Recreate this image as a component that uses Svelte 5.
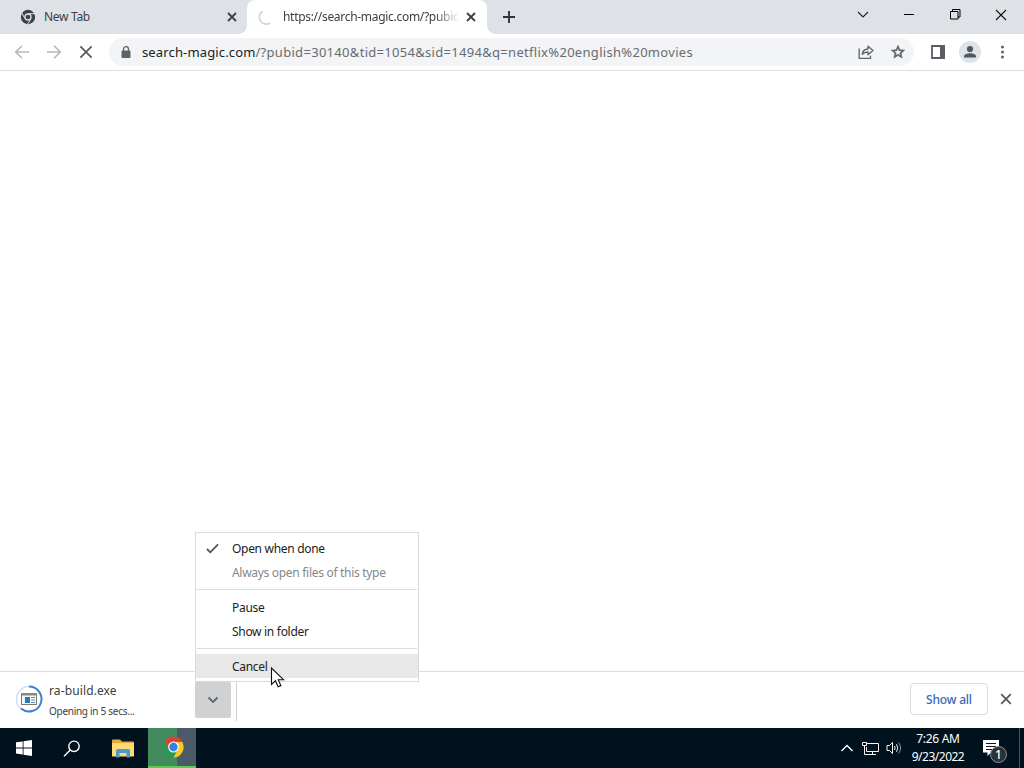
<script lang="ts">
  interface MenuItem {
    label: string;
    checked?: boolean;
    disabled?: boolean;
    hovered?: boolean;
  }

  const menuGroups: MenuItem[][] = [
    [
      { label: 'Open when done', checked: true },
      { label: 'Always open files of this type', disabled: true },
    ],
    [{ label: 'Pause' }, { label: 'Show in folder' }],
    [{ label: 'Cancel', hovered: true }],
  ];

  const host = 'search-magic.com';
  const path = '/?pubid=30140&tid=1054&sid=1494&q=netflix%20english%20movies';

  let menuOpen = $state(true);
</script>

{#snippet cross(size: number, stroke: number)}
  <svg width={size} height={size} viewBox="0 0 10 10" fill="none" stroke="currentColor" stroke-width={stroke}>
    <path d="M1 1l8 8M9 1l-8 8" />
  </svg>
{/snippet}

<div class="desktop">
  <div class="tabstrip">
    <div class="tab">
      <svg class="favicon" width="16" height="16" viewBox="0 0 16 16">
        <circle cx="8" cy="8" r="7.2" fill="#3c4248" />
        <circle cx="8" cy="8" r="3" fill="#3c4248" stroke="#dee1e6" stroke-width="1.3" />
        <path d="M8 4.7h7M5.1 9.7L1.7 3.9M10.9 9.7l-3.4 5.7" stroke="#dee1e6" stroke-width="1" />
      </svg>
      <span class="tab-title first-title">New Tab</span>
      <button class="tab-close" aria-label="Close tab">{@render cross(10, 1.8)}</button>
    </div>
    <div class="tab active">
      <svg class="favicon" width="16" height="16" viewBox="0 0 16 16" fill="none" stroke="#d3d6da" stroke-width="1.8">
        <path d="M4.6 2.2A7 7 0 0 0 12.2 14" />
      </svg>
      <span class="tab-title url-title">https://search-magic.com/?pubid</span>
      <button class="tab-close" aria-label="Close tab">{@render cross(10, 1.8)}</button>
    </div>
    <button class="new-tab" aria-label="New tab">
      <svg width="12" height="12" viewBox="0 0 12 12" stroke="#30343a" stroke-width="1.9"><path d="M6 0v12M0 6h12" /></svg>
    </button>
    <div class="window-controls">
      <button aria-label="Search tabs">
        <svg width="12" height="12" viewBox="0 0 12 12" fill="none" stroke="#222" stroke-width="1.1"><path d="M1 3l5 5 5-5" /></svg>
      </button>
      <button aria-label="Minimize">
        <svg width="10" height="10" viewBox="0 0 10 10"><path d="M0 4h10v1H0z" fill="#000" /></svg>
      </button>
      <button aria-label="Restore">
        <svg width="11" height="11" viewBox="0 0 11 11" fill="none" stroke="#000"><path d="M.5 2.5h7.500v7.500h-7.500zM2.500 2.500v-2h7.500v7.500h-2" /></svg>
      </button>
      <button aria-label="Close">
        <svg width="12" height="12" viewBox="0 0 12 12" stroke="#111" stroke-width="1.1"><path d="M1 1l10 10M11 1L1 11" /></svg>
      </button>
    </div>
  </div>

  <div class="toolbar">
    <button class="tool" aria-label="Back">
      <svg width="16" height="16" viewBox="0 0 16 16" fill="none" stroke="#b5b7ba" stroke-width="1.6"><path d="M15 8H2M8 1.700L1.700 8 8 14.300" /></svg>
    </button>
    <button class="tool" aria-label="Forward">
      <svg width="16" height="16" viewBox="0 0 16 16" fill="none" stroke="#b5b7ba" stroke-width="1.6"><path d="M1 8h13M8 1.700L14.300 8 8 14.300" /></svg>
    </button>
    <button class="tool stop" aria-label="Stop">{@render cross(14, 1.25)}</button>
    <div class="omnibox">
      <svg class="lock" width="10" height="13" viewBox="0 0 10 13">
        <rect x="0.500" y="4.500" width="9" height="7.500" rx="1" fill="#5f6368" />
        <path d="M2.500 5V3a2.500 2.300 0 0 1 5 0v2" fill="none" stroke="#5f6368" stroke-width="1.300" />
      </svg>
      <span class="address"><span class="host">{host}</span>{path}</span>
      <button class="tool" aria-label="Share">
        <svg width="18" height="16" viewBox="0 0 18 16" fill="none" stroke="#5f6368" stroke-width="1.300">
          <path d="M2.200 4.500v9.800H13.500v-2.500" />
          <path d="M5.200 10.300C5.700 6.800 8 5.100 11 5V2.200l5 4.300-5 4.300V8c-2.600 0-4.400.700-5.800 2.300z" stroke-linejoin="round" />
        </svg>
      </button>
      <button class="tool" aria-label="Bookmark">
        <svg width="16" height="16" viewBox="0 0 24 24" fill="#5f6368">
          <path d="M22 9.240l-7.190-.620L12 2 9.190 8.630 2 9.240l5.460 4.730L5.820 21 12 17.270 18.180 21l-1.630-7.030L22 9.240zM12 15.400l-3.760 2.270 1-4.280-3.320-2.880 4.380-.380L12 6.100l1.710 4.040 4.380.380-3.320 2.880 1 4.280L12 15.400z" stroke="#5f6368" stroke-width="1" />
        </svg>
      </button>
    </div>
    <button class="tool side-panel" aria-label="Side panel">
      <svg width="14" height="14" viewBox="0 0 14 14"><path d="M1 1h12v12H1z" fill="#fff" stroke="#5a5e63" stroke-width="1.800" /><path d="M9 0h5v14H9z" fill="#5a5e63" /></svg>
    </button>
    <button class="tool" aria-label="Profile">
      <svg width="22" height="22" viewBox="0 0 22 22">
        <circle cx="11" cy="11" r="11" fill="#dfe3e8" />
        <g fill="#4e5963"><circle cx="11" cy="8" r="3.100" /><path d="M5 16.500v-1.200c0-2.100 3.300-3.100 6-3.100s6 1 6 3.100v1.200z" /></g>
      </svg>
    </button>
    <button class="tool" aria-label="Menu">
      <svg width="4" height="16" viewBox="0 0 4 16" fill="#5f6368"><circle cx="2.500" cy="3" r="1.500" /><circle cx="2.500" cy="8" r="1.500" /><circle cx="2.500" cy="13" r="1.500" /></svg>
    </button>
  </div>

  <div class="page"></div>

  <div class="downloads">
    <svg class="progress" width="28" height="28" viewBox="0 0 28 28" fill="none">
      <circle cx="14" cy="14" r="12.500" stroke="#cfdff3" stroke-width="1.500" />
      <path d="M14 1.500A12.500 12.500 0 1 1 6 23.600" stroke="#3f7fd0" stroke-width="2" />
      <rect x="6.500" y="8.500" width="15" height="11" fill="#f3f5f5" stroke="#827a70" />
      <path d="M6 8h16v2.500H6z" fill="#8b8881" />
      <path d="M10 12h5v6h-5z" fill="#2877b8" />
      <path d="M16 12.500h4M16 15h4M16 17.500h4" stroke="#6b94b9" />
    </svg>
    <div class="file">
      <span class="file-name">ra-build.exe</span>
      <span class="file-status">Opening in 5 secs...</span>
    </div>
    <button class="dropdown" aria-label="Download options" onclick={() => (menuOpen = !menuOpen)}>
      <svg width="12" height="8" viewBox="0 0 12 8" fill="none" stroke="#5c666b" stroke-width="1.800"><path d="M1.500 1.500L6 6l4.500-4.500" /></svg>
    </button>
    <div class="separator"></div>
    <button class="show-all">Show all</button>
    <button class="close-shelf" aria-label="Close downloads">{@render cross(12, 1.5)}</button>
    {#if menuOpen}
      <div class="menu">
        {#each menuGroups as group}
          <div class="group">
            {#each group as item}
              <div class="item" class:disabled={item.disabled} class:hovered={item.hovered}>
                <span class="check">
                  {#if item.checked}
                    <svg width="13" height="11" viewBox="0 0 13 11" fill="none" stroke="#555" stroke-width="1.800"><path d="M1 6l3.300 3.300L12 1.300" /></svg>
                  {/if}
                </span>
                <span class="label">{item.label}</span>
              </div>
            {/each}
          </div>
        {/each}
      </div>
    {/if}
  </div>

  <div class="taskbar">
    <button class="task" aria-label="Start">
      <svg width="16" height="16" viewBox="0 0 16 16" fill="#fff"><path d="M0 2.300l6.700-.9v6.100H0zM7.500 1.300L16 0v7.500H7.500zM0 8.400h6.700v6.100L0 13.600zM7.500 8.400H16V16l-8.500-1.200z" /></svg>
    </button>
    <button class="task" aria-label="Search">
      <svg width="18" height="17" viewBox="0 0 18 17" fill="none" stroke="#fff" stroke-width="1.400"><circle cx="11" cy="6.300" r="5.200" /><path d="M7.300 10L1 16.300" /></svg>
    </button>
    <button class="task files" aria-label="File Explorer">
      <svg width="22" height="19" viewBox="0 0 22 19">
        <path d="M0 1.500Q0 .5 1 .5h7l2 2h11q1 0 1 1V17H0z" fill="#e3ac3a" />
        <path d="M0 4h22v13.500H0z" fill="#fcda74" />
        <path d="M4 18.500V12q0-2 2-2h10q2 0 2 2v6.500h-3.500v-4.500h-7v4.500z" fill="#4b9acb" />
      </svg>
    </button>
    <button class="task chrome" aria-label="Chrome">
      <svg width="21" height="22" viewBox="0 0 22 22" preserveAspectRatio="none">
        <circle cx="11" cy="11" r="10.500" fill="#259b54" />
        <path d="M11 21.500A10.500 10.500 0 0 0 20.100 5.700H11l4.500 7.900z" fill="#fbc925" />
        <path d="M1.900 5.700A10.500 10.500 0 0 1 20.100 5.700H11L6.500 13.600z" fill="#df3f34" />
        <circle cx="11" cy="11" r="5.600" fill="#fff" />
        <circle cx="11" cy="11" r="4.400" fill="#347fe4" />
      </svg>
    </button>
    <div class="tray">
      <svg class="tray-up" width="12" height="8" viewBox="0 0 12 8" fill="none" stroke="#fff" stroke-width="1.400"><path d="M.5 7L6 1.500 11.500 7" /></svg>
      <svg class="network" width="17" height="15" viewBox="0 0 17 15" fill="none" stroke="#f4f6f7">
        <path d="M5 2.500h11.500v8H4.500V6M10.500 10.500v3M7 13.500h7M.5 1.500h4v3h-4zM2.500 5v8.500H7" />
      </svg>
      <svg class="volume" width="16" height="14" viewBox="0 0 16 14" fill="none" stroke="#f4f6f7">
        <path d="M1 4.500h2.500l3-3v11l-3-3H1zM8.500 5q1.300 2 0 4M10.500 3.200q2.500 3.800 0 7.600" />
        <path d="M12.600 1.500q4 5.500 0 11" stroke="#8c949b" />
      </svg>
      <div class="clock"><span class="time">7:26 AM</span><span class="date">9/23/2022</span></div>
      <div class="notifications">
        <svg width="17" height="17" viewBox="0 0 17 17"><path d="M0 0h16v12.500H8L4.500 16v-3.500H0z" fill="#fff" /><path d="M3 3.500h10M3 6.500h10M3 9.500h7" stroke="#111820" /></svg>
        <span class="count">1</span>
      </div>
      <div class="peek"></div>
    </div>
  </div>

  <svg class="cursor" width="15" height="22" viewBox="0 0 15 22">
    <path d="M1.500 1v16.500l3.900-3.700 2.700 6 2.800-1.200-2.700-5.900h5.300z" fill="#fff" stroke="#111" stroke-width="1.100" />
  </svg>
</div>

<style>
  :global(body) {
    margin: 0;
    background: #fff;
    overflow: hidden;
  }
  .desktop {
    position: relative;
    display: flex;
    flex-direction: column;
    width: 1024px;
    height: 768px;
    font-family: "Noto Sans", "Open Sans", sans-serif;
    font-size: 12px;
    color: #3c4043;
  }
  .desktop * { box-sizing: border-box; }
  button {
    display: flex;
    align-items: center;
    justify-content: center;
    padding: 0;
    border: 0;
    background: none;
    font: inherit;
    color: inherit;
    flex-shrink: 0;
  }
  svg { display: block; flex-shrink: 0; }

  .tabstrip {
    display: flex;
    height: 34px;
    background: #dee1e6;
  }
  .tab {
    display: flex;
    align-items: center;
    width: 240px;
    padding: 0 8px 0 11px;
    border-radius: 8px 8px 0 0;
  }
  .tab:first-child {
    width: 247px;
    padding-right: 7px;
    padding-left: 20px;
  }
  .tab.active { position: relative; background: #fff; }
  .tab.active::before,
  .tab.active::after {
    content: '';
    position: absolute;
    bottom: 0;
    left: -8px;
    width: 8px;
    height: 8px;
    background: radial-gradient(circle at 0 0, transparent 7.5px, #fff 8px);
  }
  .tab.active::after {
    left: auto;
    right: -8px;
    background: radial-gradient(circle at 100% 0, transparent 7.5px, #fff 8px);
  }
  .tab-title {
    flex: 1;
    min-width: 0;
    margin-left: 8px;
    white-space: nowrap;
    line-height: 18px;
  }
  .first-title { letter-spacing: -0.3px; }
  .url-title {
    margin-left: 9px;
    letter-spacing: -0.3px;
    -webkit-mask-image: linear-gradient(to right, #000 87%, transparent 101%);
    mask-image: linear-gradient(to right, #000 87%, transparent 101%);
  }
  .tab-close { width: 16px; height: 16px; color: #3c4043; }
  .active .tab-close { margin-left: 5px; }
  .new-tab { width: 44px; }
  .window-controls { display: flex; margin-left: auto; height: 29px; }
  .window-controls button { width: 46px; }

  .toolbar {
    display: flex;
    align-items: center;
    height: 37px;
    padding: 0 6px;
    border-bottom: 1px solid #dadce0;
    background: #fff;
  }
  .tool { width: 32px; height: 32px; }
  .stop { color: #55595e; }
  .omnibox {
    display: flex;
    align-items: center;
    width: 805px;
    height: 28px;
    margin-left: 7px;
    padding-left: 12px;
    border-radius: 14px;
    background: #f3f4f5;
  }
  .address {
    flex: 1;
    margin-left: 11px;
    font-size: 13px;
    letter-spacing: 0.3px;
    color: #686c71;
    white-space: nowrap;
  }
  .host { letter-spacing: 0.14px; color: #202124; }
  .side-panel { margin-left: 8px; }

  .page { flex: 1; }

  .downloads {
    position: relative;
    display: flex;
    align-items: center;
    height: 57px;
    padding-bottom: 2px;
    padding-left: 15px;
    border-top: 1px solid #dadce0;
    background: #fff;
  }
  .file {
    display: flex;
    flex: none;
    flex-direction: column;
    width: 146px;
    margin-left: 6px;
    padding-top: 3px;
    white-space: nowrap;
  }
  .file-name { line-height: 20px; letter-spacing: 0.12px; }
  .file-status { font-size: 10px; line-height: 20px; letter-spacing: -0.28px; }
  .dropdown {
    width: 36px;
    height: 36px;
    margin-top: 1px;
    border-radius: 2px;
    background: #d0d1d2;
  }
  .separator {
    width: 1px;
    height: 44px;
    margin-left: 5px;
    background: #d0d2d5;
  }
  .show-all {
    width: 78px;
    height: 32px;
    margin-left: auto;
    border: 1px solid #dadce0;
    border-radius: 4px;
    font-weight: 500;
    letter-spacing: -0.2px;
    color: #3767b8;
  }
  .close-shelf { width: 36px; height: 36px; color: #55595e; }

  .menu {
    position: absolute;
    left: 195px;
    bottom: 46px;
    width: 224px;
    height: 150px;
    padding-top: 3px;
    border: 1px solid #d8dadb;
    background: #fff;
    letter-spacing: -0.3px;
    color: #222;
  }
  .group + .group {
    margin: 5px 1px 0;
    padding-top: 5px;
    border-top: 1px solid #d9dbdc;
  }
  .item { display: flex; align-items: center; height: 24px; }
  .check { width: 36px; padding-left: 10px; }
  .group + .group .check { width: 35px; }
  .disabled { color: #858889; }
  .item.hovered { margin: 0 -1px; padding-left: 1px; background: #e8e8e8; }

  .taskbar {
    display: flex;
    height: 40px;
    background: #00121e;
    color: #fff;
  }
  .task { width: 48px; }
  .task:nth-child(2) { padding-right: 1px; }
  .files { width: 52px; padding-left: 1px; }
  .chrome {
    width: 48px;
    padding-left: 2px;
    border-bottom: 2px solid #54cf4e;
    background: linear-gradient(to right, #438b5e 0 29px, #4c5967 29px);
  }
  .tray { display: flex; align-items: center; margin-left: auto; }
  .network { margin-left: 9px; }
  .volume { margin-left: 7px; }
  .clock {
    display: flex;
    flex-direction: column;
    align-items: center;
    width: 73px;
    padding-right: 1px;
    line-height: 18px;
  }
  .time { letter-spacing: -0.3px; }
  .date { letter-spacing: -0.5px; }
  .notifications { position: relative; width: 44px; padding-left: 8px; }
  .count {
    position: absolute;
    left: 15px;
    top: 6px;
    width: 17px;
    height: 17px;
    border: 1px solid #89939a;
    border-radius: 50%;
    background: #2b3136;
    font-size: 12px;
    font-weight: 500;
    line-height: 15px;
    text-align: center;
  }
  .peek { align-self: stretch; width: 5px; border-left: 1px solid #45535d; }

  .cursor { position: absolute; left: 270px; top: 667px; }
</style>
